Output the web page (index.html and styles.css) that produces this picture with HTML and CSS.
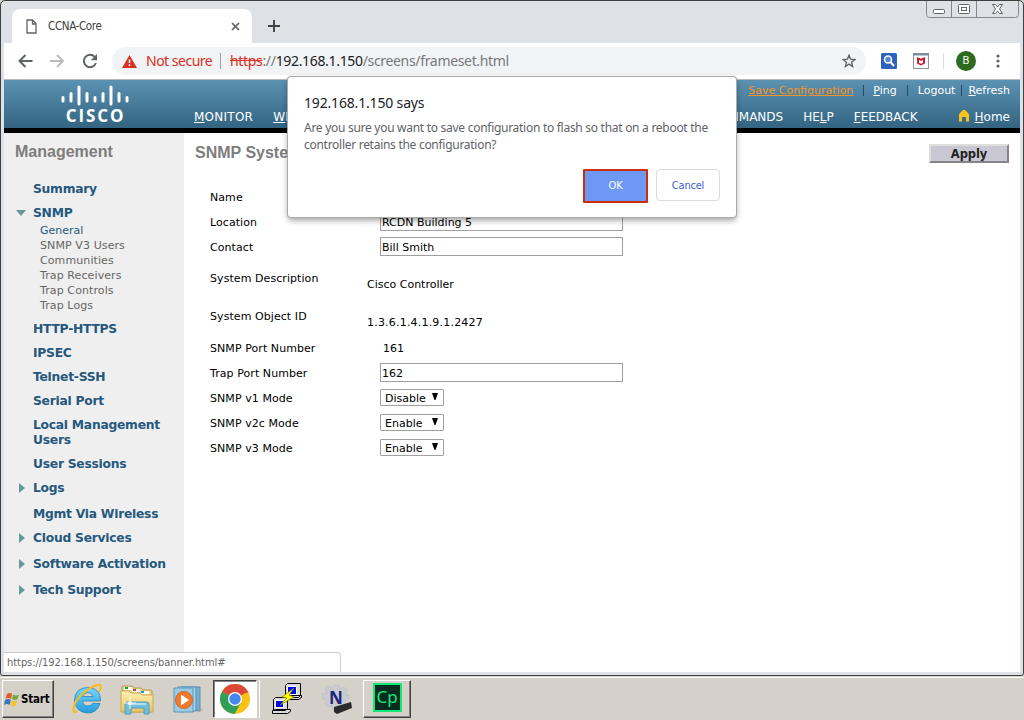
FILE: index.html
```html
<!DOCTYPE html>
<html lang="en">
<head>
<meta charset="utf-8">
<title>CCNA-Core</title>
<link rel="stylesheet" href="styles.css">
</head>
<body>
<div class="window">
  <header class="tabstrip">
    <div class="tab">
      <svg class="doc" width="11" height="15" viewBox="0 0 11 15"><path d="M1 1h5.500L10 4.500V14H1zM6.500 1v4H10" fill="none" stroke="#5f6368" stroke-width="1.300"/></svg>
      <span class="tab-title">CCNA-Core</span>
      <svg width="9" height="9" viewBox="0 0 9 9"><path d="M1 1l7 7M8 1L1 8" stroke="#5f6368" stroke-width="1.700"/></svg>
    </div>
    <svg class="plus" width="12" height="12" viewBox="0 0 12 12"><path d="M6 0v12M0 6h12" stroke="#3c4043" stroke-width="1.900"/></svg>
    <svg class="controls" width="94" height="18" viewBox="0 0 94 18"><path d="M.5 0v13.500q0 3 3 3h86q3 0 3-3V0M25.500 0v16M50.500 0v16" fill="none" stroke="#85878c"/><rect x="7.500" y="8.500" width="11" height="4" rx="1" fill="#fff" stroke="#62646a"/><rect x="32.500" y="3.500" width="11" height="9" rx="1" fill="#fff" stroke="#62646a"/><rect x="35.500" y="6.500" width="5" height="3" fill="#fff" stroke="#62646a"/><path d="M66.500 3.500h3l2 2.500 2-2.500h3l-3 4.500 3 4.500h-3l-2-2.500-2 2.500h-3l3-4.500z" fill="#fff" stroke="#62646a"/></svg>
  </header>
  <div class="toolbar">
    <svg class="back" width="15" height="14" viewBox="0 0 15 14"><path d="M14.500 7H2M7.500 1L1.500 7l6 6" fill="none" stroke="#5f6368" stroke-width="2"/></svg>
    <svg class="forward" width="15" height="14" viewBox="0 0 15 14"><path d="M0 7h13M7 1l6 6-6 6" fill="none" stroke="#babcbe" stroke-width="2"/></svg>
    <svg class="reload" width="16" height="16" viewBox="0 0 16 16"><path d="M12.700 3.800A6.200 6.200 0 1 0 13.900 10" fill="none" stroke="#5f6368" stroke-width="2"/><path d="M15 1v6.200H8.800z" fill="#5f6368"/></svg>
    <div class="omnibox">
      <svg width="15" height="13" viewBox="0 0 15 13"><path d="M7.500 0L15 13H0z" fill="#d93025"/><path d="M7.500 4.500v3.500M7.500 9.300v1.700" stroke="#fff" stroke-width="1.500"/></svg>
      <span class="unsafe">Not secure</span>
      <span class="bar"></span>
      <span class="url"><s>https</s><i>://</i>192.168.1.150<i>/screens/frameset.html</i></span>
      <svg class="star" width="14" height="14" viewBox="0 0 14 14"><path d="M7 1.200l1.600 4 4.300.3-3.300 2.800 1 4.200L7 10.200l-3.600 2.300 1-4.200L1.100 5.500l4.300-.3z" fill="none" stroke="#5f6368" stroke-width="1.400"/></svg>
    </div>
    <svg class="ext1" width="16" height="16" viewBox="0 0 16 16"><rect width="16" height="16" rx="1.500" fill="#2d62bd"/><circle cx="7" cy="6.500" r="3.500" fill="#5d88cf" stroke="#fff" stroke-width="1.500"/><path d="M9.500 9l3.500 4" stroke="#fff" stroke-width="2"/></svg>
    <svg class="ext2" width="16" height="16" viewBox="0 0 16 16"><rect x=".5" y=".5" width="15" height="15" fill="#fff" stroke="#929699"/><path d="M0 0h16v2.500H0z" fill="#78909c"/><path d="M4 4l4 1.700L12 4v6.500L8 12.500l-4-2z" fill="#c8202f"/><path d="M6 7l2 1 2-1v2.800l-2 1-2-1z" fill="#fff"/></svg>
    <span class="divider"></span>
    <span class="avatar">B</span>
    <svg class="menu" width="4" height="14" viewBox="0 0 4 14"><g fill="#5f6368"><circle cx="2" cy="2" r="1.600"/><circle cx="2" cy="7" r="1.600"/><circle cx="2" cy="12" r="1.600"/></g></svg>
  </div>
  <div class="banner">
    <div class="logo">
      <svg width="68" height="21" viewBox="0 0 68 21"><path d="M2 12.500v3.500M10 8.500v7.500M18 2v17M26 8.500v7.500M34 12.500v3.500M42 8.500v7.500M50 2v17M58 8.500v7.500M66 12.500v3.500" stroke="#fff" stroke-width="3" stroke-linecap="round"/></svg>
      <span class="logo-name">CISCO</span>
    </div>
    <nav class="nav-left"><span><u>M</u>ONITOR</span><span><u>W</u>LANs</span></nav>
    <div class="nav-right">
      <div class="utility"><u class="save">Save Configuration</u><b></b><span class="ping"><u>P</u>ing</span><b></b><span class="logout">Logout</span><b></b><span class="refresh"><u>R</u>efresh</span></div>
      <div class="nav-main"><span class="commands">C<u>O</u>MMANDS</span><span class="help">HE<u>L</u>P</span><span class="feedback"><u>F</u>EEDBACK</span><svg width="10" height="12" viewBox="0 0 10 12"><path d="M0 5q0-1 1-2l3-3h2l3 3q1 1 1 2v6.500H7V7H3v4.500H0z" fill="#fcc419"/></svg><span class="home"><u>H</u>ome</span></div>
    </div>
  </div>
  <div class="page">
    <aside class="sidebar">
      <h2>Management</h2>
      <ul class="menu-list">
        <li>Summary</li>
        <li class="open">SNMP
          <ul><li class="current">General</li><li>SNMP V3 Users</li><li>Communities</li><li>Trap Receivers</li><li>Trap Controls</li><li>Trap Logs</li></ul>
        </li>
        <li>HTTP-HTTPS</li><li>IPSEC</li><li>Telnet-SSH</li><li>Serial Port</li><li>Local Management<br>Users</li><li>User Sessions</li>
        <li class="closed">Logs</li><li class="later">Mgmt Via Wireless</li><li class="closed">Cloud Services</li><li class="closed later">Software Activation</li><li class="closed later">Tech Support</li>
      </ul>
    </aside>
    <main class="content">
      <div class="heading"><h2>SNMP System Summary</h2><button class="apply">Apply</button></div>
      <div class="form">
        <div class="row"><label>Name</label><span class="field"></span></div>
        <div class="row"><label>Location</label><span class="field">RCDN Building 5</span></div>
        <div class="row"><label>Contact</label><span class="field">Bill Smith</span></div>
        <div class="row tall"><label>System Description</label><span class="value">Cisco Controller</span></div>
        <div class="row tall"><label>System Object ID</label><span class="value oid">1.3.6.1.4.1.9.1.2427</span></div>
        <div class="row"><label>SNMP Port Number</label><span class="port">161</span></div>
        <div class="row"><label>Trap Port Number</label><span class="field">162</span></div>
        <div class="row"><label>SNMP v1 Mode</label><span class="select">Disable<svg width="6" height="7" viewBox="0 0 6 7"><path d="M0 0h6L3.500 7h-1z"/></svg></span></div>
        <div class="row"><label>SNMP v2c Mode</label><span class="select">Enable<svg width="6" height="7" viewBox="0 0 6 7"><path d="M0 0h6L3.500 7h-1z"/></svg></span></div>
        <div class="row"><label>SNMP v3 Mode</label><span class="select">Enable<svg width="6" height="7" viewBox="0 0 6 7"><path d="M0 0h6L3.500 7h-1z"/></svg></span></div>
      </div>
    </main>
  </div>
  <div class="status">https://192.168.1.150/screens/banner.html#</div>
  <section class="dialog">
    <h1>192.168.1.150 says</h1>
    <p>Are you sure you want to save configuration to flash so that on a reboot the<br>controller retains the configuration?</p>
    <div class="actions"><button class="ok">OK</button><button class="cancel">Cancel</button></div>
  </section>
</div>
<footer class="taskbar">
  <div class="start">
    <svg width="16" height="15" viewBox="0 0 16 15"><path d="M3 2q3-2 5 0L7 7Q4 5 1.500 7z" fill="#e4572a"/><path d="M9 2.500q3 2 6 0L13.500 7q-2.500 2-5.500.3z" fill="#70a83b"/><path d="M1.200 8Q4 6 6.700 8l-1 5Q3 11 0 13z" fill="#3974bd"/><path d="M7.700 8.500q3 1.500 5.500 0L12 13.500q-3 2-5.300 0z" fill="#f6bf2c"/></svg>
    <span>Start</span>
  </div>
  <svg class="ie" width="30" height="32" viewBox="0 0 30 32"><defs><linearGradient id="blue" x2="0" y2="1"><stop stop-color="#78d5fa"/><stop offset="1" stop-color="#269cdc"/></linearGradient></defs><path d="M28.500 18H10.500q.8 5 5.500 5 3 0 4.500-2.500H28Q25 30 15.500 30 3 29 2.500 17 3 5 15.500 4.500 29 5 28.500 18zM10.500 13.500H21Q20 9.500 16 9.500t-5.500 4z" fill="url(#blue)" stroke="#2586be" stroke-width=".8"/><path d="M5 28Q1 31 1.500 25 3 17 12 9.500 23 1 28 2q2 2-1 7" fill="none" stroke="#f6bd22" stroke-width="2.200"/></svg>
  <svg class="folder" width="34" height="32" viewBox="0 0 34 32"><defs><linearGradient id="paper" x2="0" y2="1"><stop stop-color="#fff2b5"/><stop offset="1" stop-color="#e5c55e"/></linearGradient></defs><path d="M2 28V3q0-1 1-1h9l2 2h7l2 2h8l1 1v21z" fill="#ead483" stroke="#b99a46"/><path d="M4 3h8v3H4zM12 5h8v3h-8zM21 7h8v3h-8z" fill="#fff"/><path d="M5 3h3v2H5z" fill="#14a22e"/><path d="M13 5h3v2h-3z" fill="#cf3c29"/><path d="M21 7h3v2h-3z" fill="#2494d9"/><path d="M1 7h8l2 2h9l2 2h10l1-1v18H1z" fill="url(#paper)" stroke="#c8a957"/><path d="M5 30V20q0-2 3-2h18q3 0 3 2v10h-5v-6H11v6z" fill="#73bddd" stroke="#4d9dc0"/><path d="M8 20h18" stroke="#c7e9f6" stroke-width="1.500"/><path d="M10 13v12M4 19h12" stroke="#fff" stroke-width=".9"/><circle cx="10" cy="19" r="2" fill="#fff" opacity=".8"/></svg>
  <svg class="media" width="32" height="28" viewBox="0 0 32 28"><path d="M22 25l8-2-3 3z" fill="#aaa69f"/><path d="M8 1h19v23l-19 2z" fill="#78afd0" stroke="#568eaf"/><path d="M5 1h18v24H5z" fill="#a7d3e8" stroke="#538eb1"/><path d="M1 2h19v24H1z" fill="#9bcbe2" stroke="#579abd"/><circle cx="11" cy="14" r="8.500" fill="#f1792c" stroke="#d66724"/><path d="M8 8.500l8 5.500-8 5.500z" fill="#fff"/></svg>
  <div class="task chrome"><svg width="30" height="30" viewBox="0 0 30 30"><circle cx="15" cy="15" r="15" fill="#fbc116"/><path d="M15 15L2 7.500A15 15 0 0 1 28 7.500L15 15z" fill="#dc4938"/><path d="M2 7.500A15 15 0 0 0 14.500 30L21 18.500 15 15z" fill="#2f9f59"/><path d="M15 8h13.300" stroke="#dc4938" stroke-width="1.500"/><circle cx="15" cy="15" r="7" fill="#fff"/><circle cx="15" cy="15" r="5.700" fill="#4688f1"/></svg></div>
  <svg class="putty" width="32" height="33" viewBox="0 0 32 33"><g stroke="#000" fill="#dadada"><path d="M14.500 3.500l2-2h13v12l-2 2h-13zM15.500 14.500l2-1h13v2l-3 2h-12z"/><path d="M16.500 4.500h9v8h-9z" fill="#0008f3" stroke="#fff"/><path d="M2.500 17.500l2-2h12v11l-2 2h-12zM1.500 28.500l3-1h15v2l-3 2h-15z"/><path d="M4.500 18.500h8v7h-8z" fill="#0008f3" stroke="#fff"/></g><path d="M23 6L11 15l5 1-7 7 14-8-5-2z" fill="#ff0" stroke="#817e00" stroke-width=".7"/></svg>
  <svg class="network" width="31" height="31" viewBox="0 0 31 31"><path d="M13 1h4l1 4 4-2 3 3-2 4 4 1v4l-4 2 2 4-4 3-4-2-1 4h-5l-1-4-4 1-3-3 2-4-5-2v-4l5-1-2-4 3-3 4 2z" fill="#c9cbd0" stroke="#b9bbc0" stroke-width=".5"/><text x="7" y="20" class="network-letter">N</text><path d="M12 23l17-5 1 6-15 6-3-2z" fill="#292b2d"/></svg>
  <div class="task captivate"><div class="cp">Cp</div></div>
</footer>
</body>
</html>
```
FILE: styles.css
```css
* { box-sizing: border-box; }
body { margin: 0; width: 1024px; height: 720px; overflow: hidden; background: #d5d0c8; font: 11px/15px "DejaVu Sans", sans-serif; color: #000; }
h1, h2, p, ul { margin: 0; padding: 0; }
ul { list-style: none; }
svg { display: block; flex: none; }
button { padding: 0; font: inherit; }
.window { position: relative; width: 1024px; height: 676px; padding: 0 3px; border: 1px solid #3d4043; border-radius: 5px 5px 3px 3px; background: #dee1e6; display: flex; flex-direction: column; }
.tabstrip { height: 42px; flex: none; display: flex; align-items: flex-start; }
.tab { height: 34px; width: 240px; margin: 8px 0 0 8px; padding: 0 12px 0 14px; border-radius: 8px 8px 0 0; background: #fff; display: flex; align-items: center; }
.tab-title { flex: 1; margin-left: 11px; font: 11.500px "DejaVu Sans Condensed", "DejaVu Sans", sans-serif; letter-spacing: -.35px; color: #3c4043; }
.plus { margin: 19px 0 0 16px; }
.controls { margin-left: auto; }
.toolbar { height: 36px; flex: none; background: #fff; display: flex; align-items: center; }
.back { margin-left: 14px; }
.forward { margin-left: 17px; }
.reload { margin-left: 17px; }
.back, .forward, .reload { margin-top: -1px; }
.omnibox { width: 754px; height: 28px; margin-left: 14px; border-radius: 14px; background: #f1f3f4; padding: 0 10px 0 10px; display: flex; align-items: center; white-space: nowrap; font: 14px/18px "Noto Sans", sans-serif; }
.unsafe { color: #d93025; margin-left: 9px; width: 66px; letter-spacing: -.5px; }
.bar { width: 1px; height: 16px; background: #9aa0a6; margin: 0 9px 0 8px; }
.url { color: #202124; letter-spacing: -.33px; }
.url i { font-style: normal; color: #75797d; }
.url s { color: #d93025; }
.star { margin-left: auto; }
.ext1 { margin-left: 15px; }
.ext2 { margin-left: 16px; }
.divider { width: 1px; height: 16px; margin: 0 12px 0 14px; background: #dadce0; }
.avatar { width: 20px; height: 20px; border-radius: 50%; background: #2c6b20; color: #fff; text-align: center; font: 11px/20px Roboto, sans-serif; }
.menu { margin-left: 20px; }
.banner { height: 54px; flex: none; border-top: 1px solid #b8b8b8; border-bottom: 5px solid #000; background: linear-gradient(#5b92b2, #336482); color: #fff; display: flex; }
.logo { width: 190px; padding: 5px 0 0 57px; }
.logo-name { display: block; width: 69px; text-align: center; font: bold 17px/20px "Open Sans", sans-serif; letter-spacing: 1.9px; }
.nav-left { display: flex; gap: 20px; width: 200px; padding-top: 30px; font-size: 12px; letter-spacing: .25px; }
.nav-right { width: 320px; margin-left: auto; padding-right: 10px; }
.utility { display: flex; justify-content: flex-end; align-items: center; height: 21px; }
.utility b { width: 1px; height: 11px; background: #244c67; }
.save { color: #f7931e; margin-right: 10px; }
.ping { margin: 0 10px 0 9px; }
.logout { margin: 0 6px 0 10px; }
.refresh { margin-left: 6px; }
.nav-main { display: flex; justify-content: flex-end; align-items: center; height: 33px; font-size: 12px; }
.nav-main svg { margin-top: -3px; }
.help { margin-left: 20px; }
.feedback { margin: 0 41px 0 20px; }
.home { margin: 0 0 0 6px; }
.page { flex: 1; background: #fff; display: flex; min-height: 0; margin-bottom: 3px; }
.sidebar { width: 180px; background: #efefef; }
.sidebar h2, .heading h2 { font: bold 16px/20px "Liberation Sans", sans-serif; color: #7d7d7d; }
.sidebar h2 { padding: 9px 0 0 11px; }
.menu-list { padding: 20px 0 0 29px; display: flex; flex-direction: column; gap: 9px; font-size: 12.300px; font-weight: bold; color: #25587e; white-space: nowrap; letter-spacing: -.25px; }
.menu-list ul { margin: 2px 0 -1px 7px; padding-bottom: 1px; font-size: 11px; font-weight: normal; letter-spacing: .1px; color: #666; }
.menu-list .current { color: #25587e; letter-spacing: 0; }
.menu-list .later { margin-top: 2px; }
.open::before, .closed::before { content: ""; float: left; border: 0 solid transparent; }
.open::before { margin: 4px 0 0 -17px; border-width: 6px 5.500px 0; border-top-color: #659998; }
.closed::before { margin: 2px 0 0 -14px; border-width: 5px 0 5px 6px; border-left-color: #659998; }
.content { flex: 1; }
.heading { display: flex; justify-content: space-between; padding: 9px 11px 0 11px; height: 52px; }
.heading h2 { margin-top: 1px; }
.apply { width: 80px; height: 19px; margin-top: 2px; border: 2px solid; border-color: #dedede #858585 #858585 #dedede; background: #c9c8d2; font: bold 11.500px/14px "DejaVu Sans", sans-serif; letter-spacing: -.1px; color: #222; }
.form { padding-left: 26px; }
.row { height: 25px; display: flex; align-items: center; }
.row label { width: 170px; letter-spacing: .07px; }
.tall { height: 38px; padding-bottom: 2px; }
.tall + .tall { padding-bottom: 1px; }
.field { width: 243px; height: 19px; margin-top: -2px; border: 1px solid #a0a0a0; background: #fff; padding: 2px 1px 0; }
.value { margin: 12px 0 0 -13px; }
.oid { letter-spacing: .2px; }
.port { margin-left: 3px; }
.select { width: 64px; height: 17px; margin-top: -2px; border: 1px solid #a0a0a0; border-radius: 1px; padding: 1px 5px 0 4px; display: flex; justify-content: space-between; align-items: center; }
.select svg { margin-top: -3px; }
.status { position: absolute; left: 3px; bottom: 3px; width: 337px; height: 20px; border: 1px solid #ccc; border-width: 1px 1px 0 0; border-radius: 0 4px 0 0; background: #fff; padding-left: 3px; font: 11px/19px "DejaVu Sans Condensed", "DejaVu Sans", sans-serif; letter-spacing: -.05px; color: #666; }
.dialog { position: absolute; left: 287px; top: 76px; width: 448px; height: 140px; border-radius: 3px; background: #fff; box-shadow: 0 0 0 1px #aaa, 0 3px 6px rgba(0,0,0,.4); padding: 16px; }
.dialog h1 { font: 14px/20px "Noto Sans", sans-serif; color: #202124; letter-spacing: -.17px; }
.dialog p { margin-top: 6px; font: 12px/17px "Noto Sans", sans-serif; color: #5f6368; letter-spacing: -.28px; white-space: nowrap; }
.actions { display: flex; justify-content: flex-end; gap: 8px; margin-top: 16px; }
.actions button { width: 64px; height: 32px; border-radius: 4px; font: 11px "DejaVu Sans Condensed", sans-serif; letter-spacing: -.2px; }
.actions .ok { width: 65px; height: 34px; padding-bottom: 2px; border: 2px solid #cb2e0b; border-radius: 1px; background: #6e98f4; color: #fff; }
.actions .cancel { border: 1px solid #dadce0; background: #fff; color: #3d5ed7; }
.taskbar { height: 44px; border-top: 1px solid #d5d0c8; box-shadow: inset 0 1px #fff; padding: 3px 0 0 2px; display: flex; align-items: flex-start; }
.start { width: 52px; height: 38px; border: 1px solid; border-color: #fff #404040 #404040 #fff; box-shadow: inset -1px -1px #808080; display: flex; align-items: center; padding-left: 1px; gap: 1px; font: bold 11.500px "DejaVu Sans Condensed", sans-serif; letter-spacing: -.2px; }
.ie { margin: 3px 0 0 18px; }
.folder { margin: 4px 0 0 18px; }
.media { margin: 6px 0 0 19px; }
.task { height: 38px; border: 1px solid; display: flex; align-items: center; justify-content: center; }
.chrome { width: 44px; margin-left: 8px; border-color: #404040 #fff #fff #404040; background: #fff; box-shadow: inset 1px 1px #888, 2px 0 #d5d0c8, 3px 0 #fff; }
.putty { margin: 2px 0 0 14px; }
.network { margin: 4px 0 0 19px; }
.network-letter { font: bold 17px "Open Sans", sans-serif; fill: #20277b; }
.captivate { width: 48px; margin-left: 10px; border-color: #fff #404040 #404040 #fff; box-shadow: inset -1px -1px #808080; }
.cp { width: 29px; height: 29px; margin-top: -3px; border: 2px solid #10e878; background: #062c20; color: #16e878; text-align: center; font: 17px/23px "Noto Sans", sans-serif; }
```
